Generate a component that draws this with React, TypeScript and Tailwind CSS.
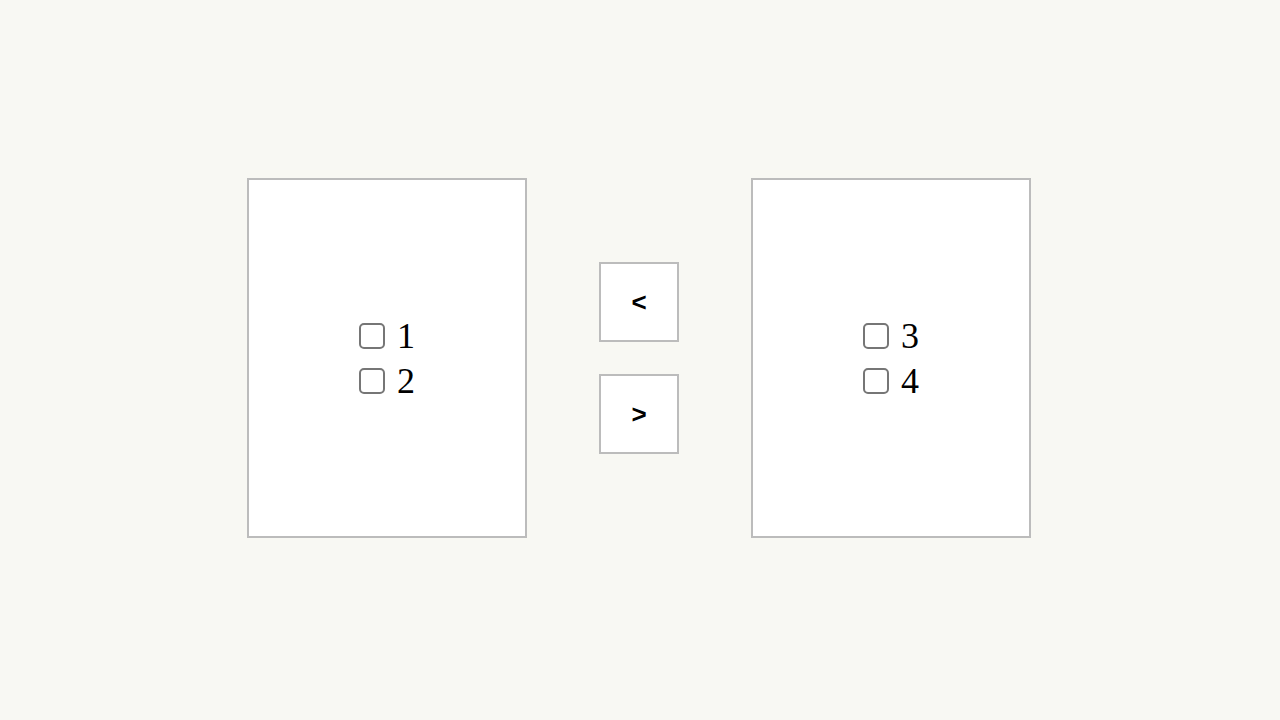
import React from 'react'

function Item({ label }: { label: string }) {
  return (
    <div className="flex items-center justify-center h-[45px] gap-[12px]">
      <span className="inline-block w-[26px] h-[26px] rounded-[5px] border-2 border-[#767676] bg-white" />
      <span className="text-[36px] leading-none text-black" style={{ fontFamily: '"Liberation Serif", "Times New Roman", serif' }}>
        {label}
      </span>
    </div>
  )
}

function ListBox({ items }: { items: string[] }) {
  return (
    <div className="w-[280px] h-[360px] bg-white border-2 border-[#bcbcbc] flex flex-col items-center justify-center">
      {items.map((i) => (
        <Item key={i} label={i} />
      ))}
    </div>
  )
}

function ArrowButton({ children }: { children: React.ReactNode }) {
  return (
    <button
      className="w-[80px] h-[80px] bg-white border-2 border-[#bcbcbc] flex items-center justify-center text-[26px] font-semibold text-black"
      style={{ fontFamily: '"Liberation Sans", Arial, sans-serif' }}
    >
      {children}
    </button>
  )
}

export default function App() {
  return (
    <div className="w-full h-[720px] bg-[#f8f8f3] flex items-center justify-center pb-[4px] pr-[2px]">
      <div className="flex items-center gap-[72px]">
        <ListBox items={['1', '2']} />
        <div className="flex flex-col gap-[32px]">
          <ArrowButton>&lt;</ArrowButton>
          <ArrowButton>&gt;</ArrowButton>
        </div>
        <ListBox items={['3', '4']} />
      </div>
    </div>
  )
}
